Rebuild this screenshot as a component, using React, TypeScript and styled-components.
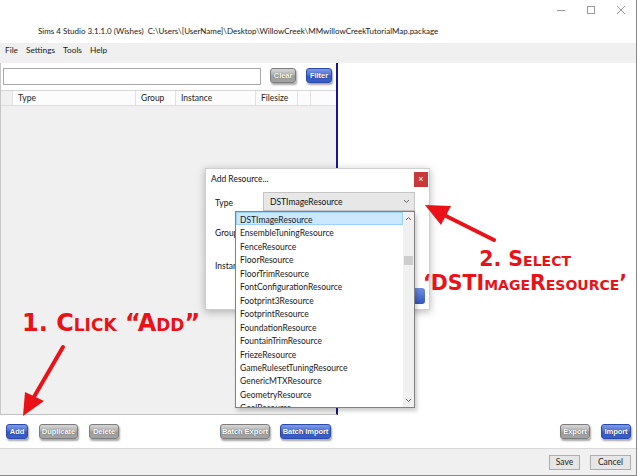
import React from 'react';
import styled, { createGlobalStyle } from 'styled-components';

const UI_FONT = 'Lato, "Open Sans", sans-serif';
const BTN_FONT = '"Liberation Sans", Arial, sans-serif';
const RED = '#ea1217';

const GlobalStyle = createGlobalStyle`
  html, body {
    margin: 0;
    padding: 0;
    background: #fff;
  }
  body {
    font-family: ${UI_FONT};
    color: #111;
  }
`;

const Window = styled.div`
  position: relative;
  width: 637px;
  height: 476px;
  box-sizing: border-box;
  border-right: 1px solid #8a8a8a;
  display: flex;
  flex-direction: column;
  overflow: hidden;
  background: #fff;
`;

const TitleBar = styled.div`
  height: 43px;
  flex: 0 0 43px;
  display: flex;
  flex-direction: column;
`;

const Controls = styled.div`
  height: 20px;
  display: flex;
  justify-content: flex-end;
`;

const ControlBox = styled.div`
  width: 30px;
  height: 20px;
  display: flex;
  align-items: center;
  justify-content: center;
`;

const Title = styled.div`
  margin-top: 5px;
  padding-left: 38px;
  font-size: 8px;
  line-height: 12px;
  white-space: pre;
  color: #1a1a1a;
`;

const MenuBar = styled.div`
  height: 20px;
  flex: 0 0 20px;
  background: #f0f0f0;
  display: flex;
  gap: 8px;
  padding-left: 5px;
  font-size: 8.3px;
  line-height: 15px;
  color: #1a1a1a;
`;

const Main = styled.div`
  flex: 1;
  display: flex;
`;

const LeftPanel = styled.div`
  width: 338px;
  box-sizing: border-box;
  border-left: 1px solid #c6c6c6;
  border-right: 2px solid #16169a;
  border-bottom: 1px solid #c0c0c0;
  display: flex;
  flex-direction: column;
`;

const SearchRow = styled.div`
  height: 27px;
  box-sizing: border-box;
  padding: 5px 0 0 2px;
  display: flex;
  align-items: flex-start;
`;

const SearchInput = styled.div`
  width: 258px;
  height: 17px;
  box-sizing: border-box;
  border: 1px solid #a9a9a9;
  background: #fff;
`;

interface BtnProps { $blue?: boolean; $w: number; $ml?: number }
const GlossButton = styled.div<BtnProps>`
  width: ${p => p.$w}px;
  height: 15px;
  margin-left: ${p => p.$ml || 0}px;
  box-sizing: border-box;
  border-radius: 3px;
  border: 1px solid ${p => (p.$blue ? '#2b4aa8' : '#7c7c7c')};
  background: ${p => p.$blue
    ? 'linear-gradient(#7d9be6 0%, #4f72d6 45%, #3558c2 55%, #3a5ec8 100%)'
    : 'linear-gradient(#d6d6d6 0%, #b2b2b2 45%, #9c9c9c 55%, #a4a4a4 100%)'};
  box-shadow: 1px 2px 2px rgba(0, 0, 0, 0.35);
  color: #fff;
  font-family: ${BTN_FONT};
  font-weight: bold;
  font-size: 7.6px;
  letter-spacing: -0.1px;
  line-height: 13px;
  text-align: center;
  text-shadow: 0 0 1px rgba(0, 0, 0, 0.6);
  white-space: nowrap;
`;

const TableHeader = styled.div`
  height: 16px;
  box-sizing: border-box;
  border-top: 1px solid #d6d6d6;
  border-bottom: 1px solid #dedede;
  display: flex;
  background: #fcfcfc;
`;

interface CellProps { $w: number; $shade?: boolean }
const HeaderCell = styled.div<CellProps>`
  width: ${p => p.$w}px;
  box-sizing: border-box;
  border-right: 1px solid #e2e2e2;
  padding-left: 5px;
  font-size: 8.5px;
  line-height: 14px;
  color: #222;
  background: ${p => (p.$shade ? '#f0f0f0' : 'transparent')};
`;

const TableBody = styled.div`
  flex: 1;
  background: #f0f0f0;
`;

const RightPanel = styled.div`
  flex: 1;
  background: #fff;
`;

const ButtonBar = styled.div`
  height: 33px;
  flex: 0 0 33px;
  display: flex;
  align-items: center;
  padding: 0 5px 0 6px;
`;

const ButtonGroup = styled.div<{ $w?: number; $end?: boolean }>`
  display: flex;
  align-items: center;
  width: ${p => (p.$w ? `${p.$w}px` : 'auto')};
  margin-left: ${p => (p.$end ? 'auto' : '0')};
`;

const Footer = styled.div`
  height: 28px;
  flex: 0 0 28px;
  box-sizing: border-box;
  background: #f0f0f0;
  border-top: 1px solid #d9d9d9;
  border-bottom: 1px solid #8a8a8a;
  display: flex;
  align-items: center;
  justify-content: flex-end;
  gap: 10px;
  padding: 0 5px 0 0;
`;

const PlainButton = styled.div<{ $w: number }>`
  width: ${p => p.$w}px;
  height: 15px;
  box-sizing: border-box;
  border: 1px solid #adadad;
  background: #e6e6e6;
  font-size: 8.5px;
  line-height: 13px;
  text-align: center;
  color: #222;
`;

/* ---------- dialog ---------- */

const Dialog = styled.div`
  position: absolute;
  left: 205px;
  top: 168px;
  width: 225px;
  height: 142px;
  box-sizing: border-box;
  background: #fff;
  border: 1px solid #cfcfcf;
  box-shadow: 0 2px 8px rgba(0, 0, 0, 0.28);
  display: flex;
  flex-direction: column;
`;

const DialogTitle = styled.div`
  height: 20px;
  display: flex;
  align-items: center;
  justify-content: space-between;
  padding: 0 1px 0 5px;
  font-size: 8.5px;
`;

const CloseBtn = styled.div`
  width: 14px;
  height: 15px;
  background: #c7393b;
  color: #fff;
  font-family: ${BTN_FONT};
  font-size: 9px;
  line-height: 15px;
  text-align: center;
`;

const DialogBody = styled.div`
  display: grid;
  grid-template-columns: 48px 152px;
  grid-template-rows: 30px 33px 33px;
  padding: 3px 0 0 9px;
  font-size: 8.5px;
`;

const FieldLabel = styled.div`
  line-height: 14px;
  padding-top: 4px;
`;

const SelectBox = styled.div`
  height: 19px;
  box-sizing: border-box;
  border: 1px solid #c4c4c4;
  background: #e7e7e7;
  display: flex;
  align-items: center;
  justify-content: space-between;
  padding: 0 4px 0 6px;
  font-size: 8.5px;
`;

const DialogFooter = styled.div`
  display: flex;
  justify-content: flex-end;
  padding: 0 4px 0 0;
`;

const OkButton = styled.div`
  width: 22px;
  height: 16px;
  border-radius: 3px;
  background: linear-gradient(#6f8fe0, #3356c0);
`;

/* ---------- dropdown ---------- */

const DropList = styled.div`
  position: absolute;
  left: 235px;
  top: 211px;
  width: 180px;
  height: 197px;
  box-sizing: border-box;
  background: #fff;
  border: 1px solid #828282;
  box-shadow: 2px 3px 4px rgba(0, 0, 0, 0.2);
  display: flex;
  overflow: hidden;
`;

const Items = styled.div`
  flex: 1;
  overflow: hidden;
`;

const Item = styled.div<{ $selected?: boolean }>`
  height: 13.46px;
  box-sizing: border-box;
  padding: 1px 0 0 3px;
  font-size: 8.5px;
  line-height: 12px;
  white-space: nowrap;
  color: #1a1a1a;
  background: ${p => (p.$selected ? '#cce8ff' : 'transparent')};
  border: 1px solid ${p => (p.$selected ? '#99d1ff' : 'transparent')};
`;

const ScrollBar = styled.div`
  width: 11px;
  background: #f0f0f0;
  display: flex;
  flex-direction: column;
  align-items: center;
  justify-content: space-between;
  padding: 4px 0;
  box-sizing: border-box;
`;

const Thumb = styled.div`
  width: 9px;
  height: 9px;
  background: #cdcdcd;
  margin-top: 35px;
  margin-bottom: auto;
`;

/* ---------- annotations ---------- */

const Note = styled.div<{ $x: number; $y: number; $size: number }>`
  position: absolute;
  left: ${p => p.$x}px;
  top: ${p => p.$y}px;
  color: ${RED};
  font-family: "DejaVu Sans", sans-serif;
  font-weight: bold;
  font-variant: small-caps;
  font-size: ${p => p.$size}px;
  line-height: ${p => p.$size + 3}px;
  white-space: nowrap;
  text-align: center;
`;

const ArrowLayer = styled.svg`
  position: absolute;
  left: 0;
  top: 0;
  pointer-events: none;
`;

const types = [
  'DSTImageResource',
  'EnsembleTuningResource',
  'FenceResource',
  'FloorResource',
  'FloorTrimResource',
  'FontConfigurationResource',
  'Footprint3Resource',
  'FootprintResource',
  'FoundationResource',
  'FountainTrimResource',
  'FriezeResource',
  'GameRulesetTuningResource',
  'GenericMTXResource',
  'GeometryResource',
  'GoalResource',
];

const Chevron = ({ up }: { up?: boolean }) => (
  <svg width="7" height="5" viewBox="0 0 7 5">
    <path d={up ? 'M1 4 L3.5 1.5 L6 4' : 'M1 1 L3.5 3.5 L6 1'} fill="none" stroke="#666" strokeWidth="1" />
  </svg>
);

const App = () => (
  <Window>
    <GlobalStyle />
    <TitleBar>
      <Controls>
        <ControlBox>
          <svg width="10" height="10"><path d="M1 5.5 H9" stroke="#999" /></svg>
        </ControlBox>
        <ControlBox>
          <svg width="10" height="10"><rect x="1.5" y="1.5" width="7" height="7" fill="none" stroke="#999" /></svg>
        </ControlBox>
        <ControlBox>
          <svg width="10" height="10"><path d="M1 1 L9 9 M9 1 L1 9" stroke="#999" /></svg>
        </ControlBox>
      </Controls>
      <Title>{'Sims 4 Studio 3.1.1.0 (Wishes)  C:\\Users\\[UserName]\\Desktop\\WillowCreek\\MMwillowCreekTutorialMap.package'}</Title>
    </TitleBar>

    <MenuBar>
      <span>File</span>
      <span>Settings</span>
      <span>Tools</span>
      <span>Help</span>
    </MenuBar>

    <Main>
      <LeftPanel>
        <SearchRow>
          <SearchInput />
          <GlossButton $w={26} $ml={9}>Clear</GlossButton>
          <GlossButton $blue $w={26} $ml={10}>Filter</GlossButton>
        </SearchRow>
        <TableHeader>
          <HeaderCell $w={12} $shade />
          <HeaderCell $w={123}>Type</HeaderCell>
          <HeaderCell $w={40}>Group</HeaderCell>
          <HeaderCell $w={80}>Instance</HeaderCell>
          <HeaderCell $w={42}>Filesize</HeaderCell>
          <HeaderCell $w={13} />
        </TableHeader>
        <TableBody />
      </LeftPanel>
      <RightPanel />
    </Main>

    <ButtonBar>
      <ButtonGroup $w={214}>
        <GlossButton $blue $w={22}>Add</GlossButton>
        <GlossButton $w={39} $ml={11}>Duplicate</GlossButton>
        <GlossButton $w={30} $ml={11}>Delete</GlossButton>
      </ButtonGroup>
      <ButtonGroup>
        <GlossButton $w={50}>Batch Export</GlossButton>
        <GlossButton $blue $w={51} $ml={10}>Batch Import</GlossButton>
      </ButtonGroup>
      <ButtonGroup $end>
        <GlossButton $w={30}>Export</GlossButton>
        <GlossButton $blue $w={30} $ml={11}>Import</GlossButton>
      </ButtonGroup>
    </ButtonBar>

    <Footer>
      <PlainButton $w={31}>Save</PlainButton>
      <PlainButton $w={41}>Cancel</PlainButton>
    </Footer>

    <Dialog>
      <DialogTitle>
        <span>Add Resource...</span>
        <CloseBtn>×</CloseBtn>
      </DialogTitle>
      <DialogBody>
        <FieldLabel>Type</FieldLabel>
        <SelectBox>
          <span>DSTImageResource</span>
          <Chevron />
        </SelectBox>
        <FieldLabel>Group</FieldLabel>
        <SelectBox />
        <FieldLabel>Instance</FieldLabel>
        <SelectBox />
      </DialogBody>
      <DialogFooter>
        <OkButton />
      </DialogFooter>
    </Dialog>

    <DropList>
      <Items>
        {types.map((t, i) => (
          <Item key={t} $selected={i === 0}>{t}</Item>
        ))}
      </Items>
      <ScrollBar>
        <Chevron up />
        <Thumb />
        <Chevron />
      </ScrollBar>
    </DropList>

    <Note $x={22} $y={310} $size={24}>1. Click “Add”</Note>
    <Note $x={423} $y={248} $size={20.5}>
      2. Select<br />‘DSTImageResource’
    </Note>

    <ArrowLayer width="637" height="476">
      <line x1="63" y1="347" x2="31" y2="402" stroke={RED} strokeWidth="4" strokeLinecap="round" />
      <polygon points="23,416 25,392 44,401" fill={RED} />
      <line x1="494" y1="240" x2="440" y2="213" stroke={RED} strokeWidth="4" strokeLinecap="round" />
      <polygon points="425,205 451,206 441,225" fill={RED} />
    </ArrowLayer>
  </Window>
);

export default App;
